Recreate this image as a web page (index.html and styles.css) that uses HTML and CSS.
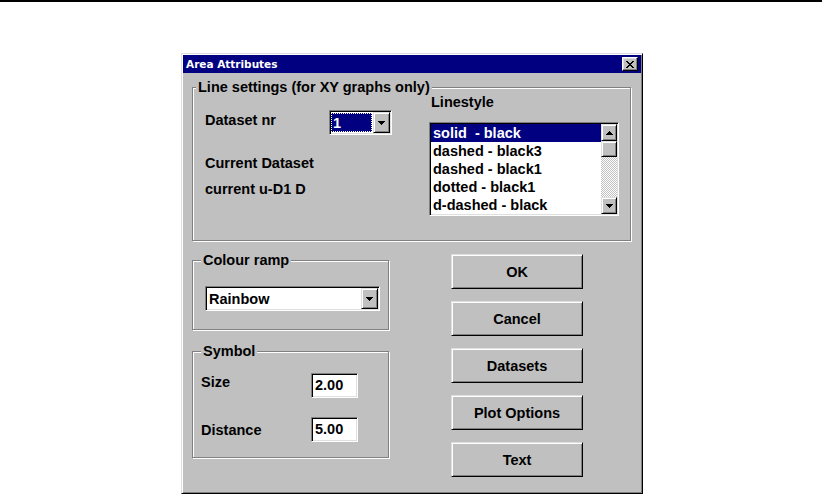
FILE: index.html
```html
<!DOCTYPE html>
<html>
<head>
<meta charset="utf-8">
<title>Area Attributes</title>
<link rel="stylesheet" href="styles.css">
</head>
<body>
<div class="topline"></div>
<div class="dialog">
  <div class="titlebar">
    <span class="title">Area Attributes</span>
    <button class="close" type="button" aria-label="Close">
      <svg width="8" height="7" viewBox="0 0 8 7" shape-rendering="crispEdges"><path d="M0 0h2v1H0zM6 0h2v1H6zM1 1h2v1H1zM5 1h2v1H5zM2 2h4v1H2zM3 3h2v1H3zM2 4h4v1H2zM1 5h2v1H1zM5 5h2v1H5zM0 6h2v1H0zM6 6h2v1H6z" fill="#000"/></svg>
    </button>
  </div>
  <div class="content">
    <fieldset class="group g-line">
      <legend>Line settings (for XY graphs only)</legend>
      <div class="g-line-body">
        <div class="col-left">
          <div class="row-ds">
            <span class="lbl">Dataset nr</span>
            <div class="combo combo-ds">
              <div class="edit sel-edit"><span>1</span></div>
              <div class="dd"><svg width="7" height="4" viewBox="0 0 7 4" shape-rendering="crispEdges"><path d="M0 0h7v1H0zM1 1h5v1H1zM2 2h3v1H2zM3 3h1v1H3z" fill="#000"/></svg></div>
            </div>
          </div>
          <div class="lbl cur1">Current Dataset</div>
          <div class="lbl cur2">current u-D1 D</div>
        </div>
        <div class="col-right">
          <div class="lbl ls">Linestyle</div>
          <div class="listbox">
            <ul class="items">
              <li class="sel">solid  - black</li>
              <li>dashed - black3</li>
              <li>dashed - black1</li>
              <li>dotted - black1</li>
              <li>d-dashed - black</li>
            </ul>
            <div class="vscroll">
              <div class="sb-btn"><svg width="7" height="4" viewBox="0 0 7 4" shape-rendering="crispEdges"><path d="M3 0h1v1H3zM2 1h3v1H2zM1 2h5v1H1zM0 3h7v1H0z" fill="#000"/></svg></div>
              <div class="thumb"></div>
              <div class="track"></div>
              <div class="sb-btn"><svg width="7" height="4" viewBox="0 0 7 4" shape-rendering="crispEdges"><path d="M0 0h7v1H0zM1 1h5v1H1zM2 2h3v1H2zM3 3h1v1H3z" fill="#000"/></svg></div>
            </div>
          </div>
        </div>
      </div>
    </fieldset>
    <div class="bottom">
      <div class="bcol-left">
        <fieldset class="group g-ramp">
          <legend>Colour ramp</legend>
          <div class="combo combo-ramp">
            <div class="edit">Rainbow</div>
            <div class="dd"><svg width="7" height="4" viewBox="0 0 7 4" shape-rendering="crispEdges"><path d="M0 0h7v1H0zM1 1h5v1H1zM2 2h3v1H2zM3 3h1v1H3z" fill="#000"/></svg></div>
          </div>
        </fieldset>
        <fieldset class="group g-sym">
          <legend>Symbol</legend>
          <div class="sym-body">
            <div class="field-row size">
              <span class="lbl">Size</span>
              <div class="input">2.00</div>
            </div>
            <div class="field-row dist">
              <span class="lbl">Distance</span>
              <div class="input">5.00</div>
            </div>
          </div>
        </fieldset>
      </div>
      <div class="buttons">
        <button class="btn" type="button">OK</button>
        <button class="btn" type="button">Cancel</button>
        <button class="btn" type="button">Datasets</button>
        <button class="btn" type="button">Plot Options</button>
        <button class="btn" type="button">Text</button>
      </div>
    </div>
  </div>
</div>
</body>
</html>
```

FILE: styles.css
```css
* { box-sizing: border-box; }
html, body { margin: 0; padding: 0; background: #fff; }
body {
  font-family: "Liberation Sans", Arial, sans-serif;
  font-weight: bold;
  font-size: 14.5px;
  color: #000;
  width: 822px;
  height: 494px;
  overflow: hidden;
}
.topline { height: 2px; background: #000; }

.dialog {
  margin: 51px 0 0 181px;
  width: 462px;
  height: 441px;
  background: #c0c0c0;
  border: 1px solid;
  border-color: #dfdfdf #000 #000 #dfdfdf;
  box-shadow: inset 1px 1px #fff, inset -1px -1px #808080;
  padding: 1px;
  overflow: hidden;
}
.titlebar {
  height: 18px;
  background: #000080;
  display: flex;
  align-items: center;
  justify-content: space-between;
  padding: 0 3px 0 3px;
}
.title {
  font-family: "DejaVu Sans", sans-serif;
  font-size: 10.5px;
  color: #fff;
  line-height: 18px;
}
.close {
  width: 16px;
  height: 14px;
  padding: 0;
  margin: 0;
  background: #c0c0c0;
  border: 1px solid;
  border-color: #fff #000 #000 #fff;
  box-shadow: inset -1px -1px #808080, inset 1px 1px #dfdfdf;
  display: flex;
  align-items: center;
  justify-content: center;
}

.combo, .listbox, .input {
  border: 1px solid;
  border-color: #808080 #fff #fff #808080;
  box-shadow: inset 1px 1px #000, inset -1px -1px #dfdfdf;
  padding: 1px;
  background: #fff;
}

.content { padding: 6px 0 0 9px; }

.group {
  margin: 0;
  padding: 0;
  border: 1px solid #808080;
  box-shadow: inset 1px 1px #fff, 1px 1px #fff;
  min-width: 0;
}
.group legend {
  padding: 0 2px;
  margin-left: 3px;
  line-height: 16px;
  height: 16px;
  background: #c0c0c0;
}

.g-line { width: 439px; }
.g-line-body { height: 145px; display: flex; }
.lbl { line-height: 14px; white-space: pre; }

.col-left { width: 236px; padding-left: 12px; }
.row-ds { display: flex; margin-top: 15px; height: 25px; }
.row-ds .lbl { width: 124px; margin-top: 3px; }
.cur1 { margin-top: 21px; }
.cur2 { margin-top: 12px; }

.col-right { width: 190px; }
.ls { margin-left: 2px; }

.listbox {
  margin-top: 13px;
  width: 190px;
  height: 94px;
  display: flex;
}
.items { list-style: none; margin: 0; padding: 0; flex: 1; }
.items li {
  height: 18px;
  line-height: 18px;
  padding-left: 2px;
  white-space: pre;
}
.items li.sel { background: #000080; color: #fff; }

.vscroll { width: 16px; display: flex; flex-direction: column; }
.sb-btn, .thumb, .dd, .btn {
  background: #c0c0c0;
  border: 1px solid;
  border-color: #dfdfdf #000 #000 #dfdfdf;
  box-shadow: inset 1px 1px #fff, inset -1px -1px #808080;
}
.sb-btn {
  height: 17px;
  display: flex;
  align-items: center;
  justify-content: center;
}
.thumb { height: 16px; }
.track {
  flex: 1;
  background: repeating-conic-gradient(#fff 0 25%, #c0c0c0 0 50%) 0 0 / 2px 2px;
}

.combo { display: flex; height: 25px; }
.combo-ds { width: 63px; }
.edit {
  flex: 1;
  display: flex;
  align-items: center;
  padding-left: 2px;
  line-height: 16px;
}
.sel-edit {
  margin: 1px 1px 1px 0;
  background: #000080;
  color: #fff;
  outline: 1px dotted #fff;
  outline-offset: -1px;
}
.dd {
  width: 17px;
  display: flex;
  align-items: center;
  justify-content: center;
}

.bottom { display: flex; margin-top: 11px; }
.bcol-left { width: 197px; }
.g-ramp legend, .g-sym legend { margin-left: 8px; }
.combo-ramp { width: 175px; margin: 18px 0 18px 12px; }
.g-sym { margin-top: 13px; }
.sym-body { height: 98px; padding: 14px 0 0 8px; }
.field-row { display: flex; height: 25px; }
.field-row .lbl { width: 110px; }
.size .lbl { margin-top: 2px; }
.dist { margin-top: 19px; }
.dist .lbl { margin-top: 6px; }
.input {
  width: 47px;
  height: 25px;
  padding-left: 3px;
  line-height: 21px;
}

.buttons {
  margin-left: 62px;
  padding-top: 2px;
  display: flex;
  flex-direction: column;
  gap: 12px;
}
.btn {
  width: 132px;
  height: 35px;
  padding: 0;
  margin: 0;
  font: inherit;
  color: #000;
  text-align: center;
}
```
